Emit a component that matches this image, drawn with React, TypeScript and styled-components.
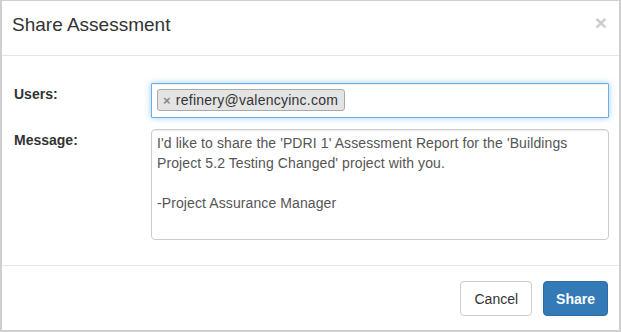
import React from 'react';
import styled, { createGlobalStyle } from 'styled-components';

const GlobalStyle = createGlobalStyle`
  html, body {
    margin: 0;
    padding: 0;
    background: #fff;
  }
  body {
    font-family: "Liberation Sans", Arial, Helvetica, sans-serif;
    font-size: 14px;
    color: #333;
  }
`;

const Modal = styled.div`
  box-sizing: border-box;
  width: 621px;
  height: 332px;
  border: 2px solid #cfcfcf;
  border-top-width: 1px;
  background: #fff;
  display: flex;
  flex-direction: column;
`;

const Header = styled.div`
  display: flex;
  align-items: center;
  justify-content: space-between;
  height: 54px;
  padding: 0 12px 0 10px;
  border-bottom: 1px solid #e5e5e5;
`;

const Title = styled.h4`
  margin: 0;
  font-size: 19px;
  font-weight: normal;
  color: #333;
  margin-top: -6px;
`;

const Close = styled.button`
  border: 0;
  background: none;
  padding: 0;
  font-family: inherit;
  font-size: 21px;
  font-weight: bold;
  line-height: 1;
  color: #000;
  opacity: 0.2;
  margin-top: -11px;
  cursor: pointer;
`;

const Body = styled.div`
  flex: 1;
  display: flex;
  flex-direction: column;
  gap: 11px;
  padding: 27px 10px 0 12px;
`;

const Row = styled.div`
  display: grid;
  grid-template-columns: 137px 1fr;
  align-items: start;
`;

const Label = styled.label<{ $top: number }>`
  font-weight: bold;
  font-size: 14px;
  color: #333;
  padding-top: ${(p) => p.$top}px;
`;

const TagInput = styled.div`
  box-sizing: border-box;
  height: 35px;
  border: 1px solid #66afe9;
  border-radius: 1px;
  box-shadow: inset 0 1px 1px rgba(0, 0, 0, 0.075), 0 0 6px rgba(102, 175, 233, 0.6);
  padding: 3px 5px;
  display: flex;
  align-items: center;
`;

const Tag = styled.span`
  display: inline-flex;
  align-items: center;
  gap: 5px;
  height: 22px;
  box-sizing: border-box;
  padding: 0 6px 0 5px;
  background: #e4e4e4;
  border: 1px solid #aaa;
  border-radius: 3px;
  font-size: 14px;
  letter-spacing: 0.25px;
  color: #333;
  margin-top: -2px;
`;

const TagRemove = styled.span`
  color: #888;
  font-weight: bold;
  font-size: 13px;
  margin-top: 1px;
`;

const Textarea = styled.textarea`
  box-sizing: border-box;
  width: 100%;
  height: 111px;
  margin: 0;
  resize: none;
  border: 1px solid #ccc;
  border-radius: 4px;
  padding: 3px 5px;
  font-family: "Liberation Sans", Arial, Helvetica, sans-serif;
  font-size: 14px;
  letter-spacing: 0.1px;
  line-height: 20px;
  color: #555;
  outline: none;
  box-shadow: inset 0 1px 1px rgba(0, 0, 0, 0.075);
`;

const Footer = styled.div`
  display: flex;
  justify-content: flex-end;
  gap: 11px;
  padding: 15px 11px 14px;
  border-top: 1px solid #e5e5e5;
`;

const Button = styled.button<{ $primary?: boolean }>`
  height: 35px;
  padding: 0 ${(p) => (p.$primary ? 12 : 13)}px;
  border-radius: 4px;
  font-family: "Liberation Sans", Arial, Helvetica, sans-serif;
  font-size: 14px;
  cursor: pointer;
  border: 1px solid ${(p) => (p.$primary ? '#2e6da4' : '#ccc')};
  background: ${(p) => (p.$primary ? '#337ab7' : '#fff')};
  color: ${(p) => (p.$primary ? '#fff' : '#333')};
  font-weight: ${(p) => (p.$primary ? 'bold' : 'normal')};
`;

const message =
  "I'd like to share the 'PDRI 1' Assessment Report for the 'Buildings Project 5.2 Testing Changed' project with you.\n\n-Project Assurance Manager";

const App = () => {
  return (
    <>
      <GlobalStyle />
      <Modal>
        <Header>
          <Title>Share Assessment</Title>
          <Close aria-label="Close">×</Close>
        </Header>
        <Body>
          <Row>
            <Label $top={3}>Users:</Label>
            <TagInput>
              <Tag>
                <TagRemove>×</TagRemove>
                refinery@valencyinc.com
              </Tag>
            </TagInput>
          </Row>
          <Row>
            <Label $top={3}>Message:</Label>
            <Textarea defaultValue={message} readOnly />
          </Row>
        </Body>
        <Footer>
          <Button>Cancel</Button>
          <Button $primary>Share</Button>
        </Footer>
      </Modal>
    </>
  );
};

export default App;
